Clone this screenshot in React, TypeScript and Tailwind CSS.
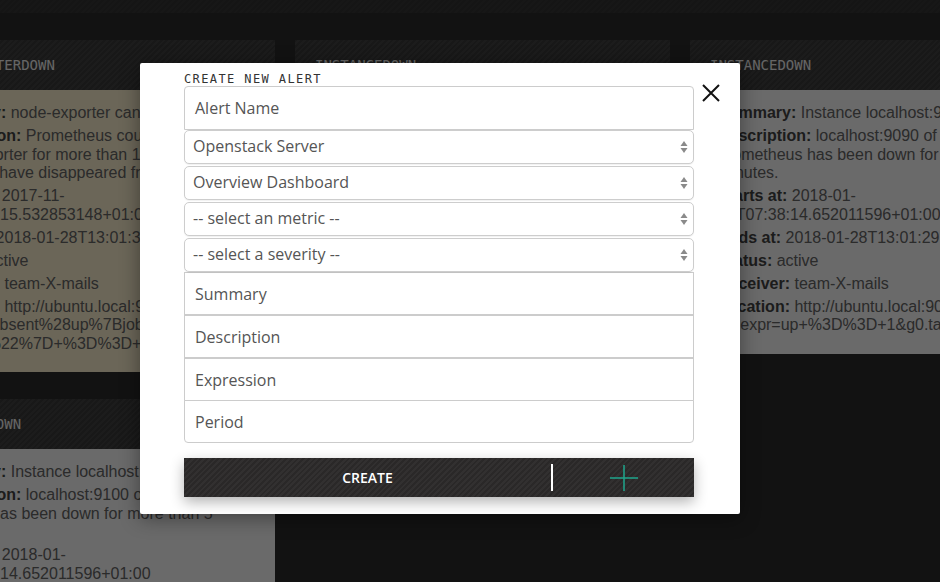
import { ReactNode } from "react";

interface Field {
    label: string;
    lines: string[];
}

interface Alert {
    name: string;
    tone: string;
    fields: Field[];
}

const columns: Alert[][] = [
    [
        {
            name: "NODEEXPORTERDOWN",
            tone: "bg-[#fff3d2]",
            fields: [
                { label: "Summary", lines: ["node-exporter cannot be scraped"] },
                { label: "Description", lines: ["Prometheus could not scrape a", "node-exporter for more than 1m, or node-", "exporters have disappeared from discovery."] },
                { label: "Starts at", lines: ["2017-11-", "29T07:38:15.532853148+01:00"] },
                { label: "Ends at", lines: ["2018-01-28T13:01:37.8921+01:00"] },
                { label: "Status", lines: ["active"] },
                { label: "Receiver", lines: ["team-X-mails"] },
                { label: "Location", lines: ["http://ubuntu.local:9090/graph?", "g0.expr=absent%28up%7Bjob%3D%22node", "exporter%22%7D+%3D%3D+1&g0.tab=1"] },
            ],
        },
        {
            name: "INSTANCEDOWN",
            tone: "bg-[#fcfcfc]",
            fields: [
                { label: "Summary", lines: ["Instance localhost:9100 down"] },
                { label: "Description", lines: ["localhost:9100 of job node-", "exporter has been down for more than 5", "minutes."] },
                { label: "Starts at", lines: ["2018-01-", "29T07:38:14.652011596+01:00"] },
                { label: "Ends at", lines: ["2018-01-28T13:01:29.57+01:00"] },
                { label: "Status", lines: ["active"] },
            ],
        },
    ],
    [
        {
            name: "INSTANCEDOWN",
            tone: "bg-[#fcfcfc]",
            fields: [
                { label: "Summary", lines: ["Instance localhost:9093 down"] },
                { label: "Description", lines: ["localhost:9093 of job", "alertmanager has been down for more than", "5 minutes."] },
                { label: "Starts at", lines: ["2018-01-", "29T07:38:14.652011596+01:00"] },
                { label: "Ends at", lines: ["2018-01-28T13:01:29.57+01:00"] },
                { label: "Status", lines: ["active"] },
                { label: "Receiver", lines: ["team-X-mails"] },
                { label: "Location", lines: ["http://ubuntu.local:9090/graph?", "g0.expr=up+%3D%3D+1&g0.tab=1"] },
            ],
        },
    ],
    [
        {
            name: "INSTANCEDOWN",
            tone: "bg-[#fcfcfc]",
            fields: [
                { label: "Summary", lines: ["Instance localhost:9090 down"] },
                { label: "Description", lines: ["localhost:9090 of job", "prometheus has been down for more than 5", "minutes."] },
                { label: "Starts at", lines: ["2018-01-", "29T07:38:14.652011596+01:00"] },
                { label: "Ends at", lines: ["2018-01-28T13:01:29.57+01:00"] },
                { label: "Status", lines: ["active"] },
                { label: "Receiver", lines: ["team-X-mails"] },
                { label: "Location", lines: ["http://ubuntu.local:9090/graph?", "g0.expr=up+%3D%3D+1&g0.tab=1"] },
            ],
        },
    ],
];

const stripes = "bg-[repeating-linear-gradient(135deg,#3b3b3b_0px,#3b3b3b_2px,#434343_2px,#434343_4px)]";

function AlertCard({ alert }: { alert: Alert }) {
    return (
        <div className="w-[375px] overflow-hidden">
            <div className={`h-[50px] flex items-center pl-5 ${stripes}`}>
                <h2 className="font-['DejaVu_Sans_Mono',monospace] text-[14px] text-[#f2f2f2]">{alert.name}</h2>
            </div>
            <div className={`${alert.tone} pl-7 pt-[14px] pb-[19px] flex flex-col gap-[4.5px] font-['Liberation_Sans',Arial,sans-serif] text-[16px] leading-[18.5px] text-[#666] whitespace-nowrap`}>
                {alert.fields.map((f, i) => (
                    <p key={i}>
                        <b className="text-[#444]">{f.label}:</b> {f.lines[0]}
                        {f.lines.slice(1).map((l, j) => (
                            <span key={j}>
                                <br />
                                {l}
                            </span>
                        ))}
                    </p>
                ))}
            </div>
        </div>
    );
}

function Arrows() {
    return (
        <svg width="8" height="14" viewBox="0 0 8 14" className="absolute right-[5px] top-1/2 -translate-y-1/2">
            <path d="M4 1 L7.5 6 L0.5 6 Z" fill="#8a8a8a" />
            <path d="M4 13 L7.5 8 L0.5 8 Z" fill="#8a8a8a" />
        </svg>
    );
}

function Select({ children, first }: { children: ReactNode; first?: boolean }) {
    return (
        <div className={`relative h-[34px] ${first ? "" : "mt-[2px]"} rounded-[5px] border border-[#cdcdcd] bg-white shadow-[0_1px_1px_rgba(0,0,0,0.06)] flex items-center pl-2 pb-[2px] text-[16px] text-[#555]`}>
            {children}
            <Arrows />
        </div>
    );
}

function TextInput({ label, className }: { label: string; className: string }) {
    return (
        <div className={`h-[43px] border border-[#cccccc] bg-white flex items-center pl-[10px] text-[16px] text-[#555] ${className}`}>
            {label}
        </div>
    );
}

export default function App() {
    return (
        <div className="relative w-full h-[582px] overflow-hidden bg-[#2b2d2d]">
            <div className="h-[13px] bg-[repeating-linear-gradient(135deg,#333_0px,#333_2px,#383838_2px,#383838_4px)]" />
            <div className="flex gap-5 -ml-[100px] mt-[27px]">
                {columns.map((col, i) => (
                    <div key={i} className="flex flex-col gap-[27px] shrink-0">
                        {col.map((a, j) => (
                            <AlertCard key={j} alert={a} />
                        ))}
                    </div>
                ))}
            </div>

            <div className="absolute inset-0 bg-black/[0.58]" />

            <div className="absolute left-[140px] top-[63px] w-[600px] bg-white rounded-[2px] shadow-[0_4px_20px_rgba(0,0,0,0.4)] pl-[44px] pr-[46px] pt-[9px] pb-[17px] font-['Open_Sans',sans-serif]">
                <button className="absolute top-[21px] right-[20px] w-[18px] h-[18px]">
                    <svg width="18" height="18" viewBox="0 0 18 18">
                        <path d="M1 1 L17 17 M17 1 L1 17" stroke="#111" strokeWidth="2" />
                    </svg>
                </button>
                <h3 className="font-['DejaVu_Sans_Mono',monospace] text-[12px] leading-[14px] tracking-[1.4px] text-[#333]">CREATE NEW ALERT</h3>
                <div className="flex flex-col">
                    <div className="h-[44px] border border-[#cccccc] rounded-t-[4px] flex items-center pl-[10px] text-[16px] text-[#555]">Alert Name</div>
                    <Select first>Openstack Server</Select>
                    <Select>Overview Dashboard</Select>
                    <Select>-- select an metric --</Select>
                    <Select>-- select a severity --</Select>
                    <TextInput label="Summary" className="" />
                    <TextInput label="Description" className="" />
                    <TextInput label="Expression" className="" />
                    <TextInput label="Period" className="-mt-px rounded-b-[4px]" />
                </div>
                <div className="mt-[15px] h-[39px] flex items-center bg-[repeating-linear-gradient(135deg,#2a2828_0px,#2a2828_2px,#323030_2px,#323030_4px)] shadow-[0_5px_14px_rgba(0,0,0,0.3)]">
                    <div className="w-[367px] text-center text-white text-[14px] font-semibold">CREATE</div>
                    <div className="w-[2px] h-[27px] bg-white" />
                    <div className="flex-1 flex justify-center">
                        <svg width="28" height="26" viewBox="0 0 28 26">
                            <path d="M14 0 V26 M0 13 H28" stroke="#1fa58c" strokeWidth="1.5" />
                        </svg>
                    </div>
                </div>
            </div>
        </div>
    );
}
